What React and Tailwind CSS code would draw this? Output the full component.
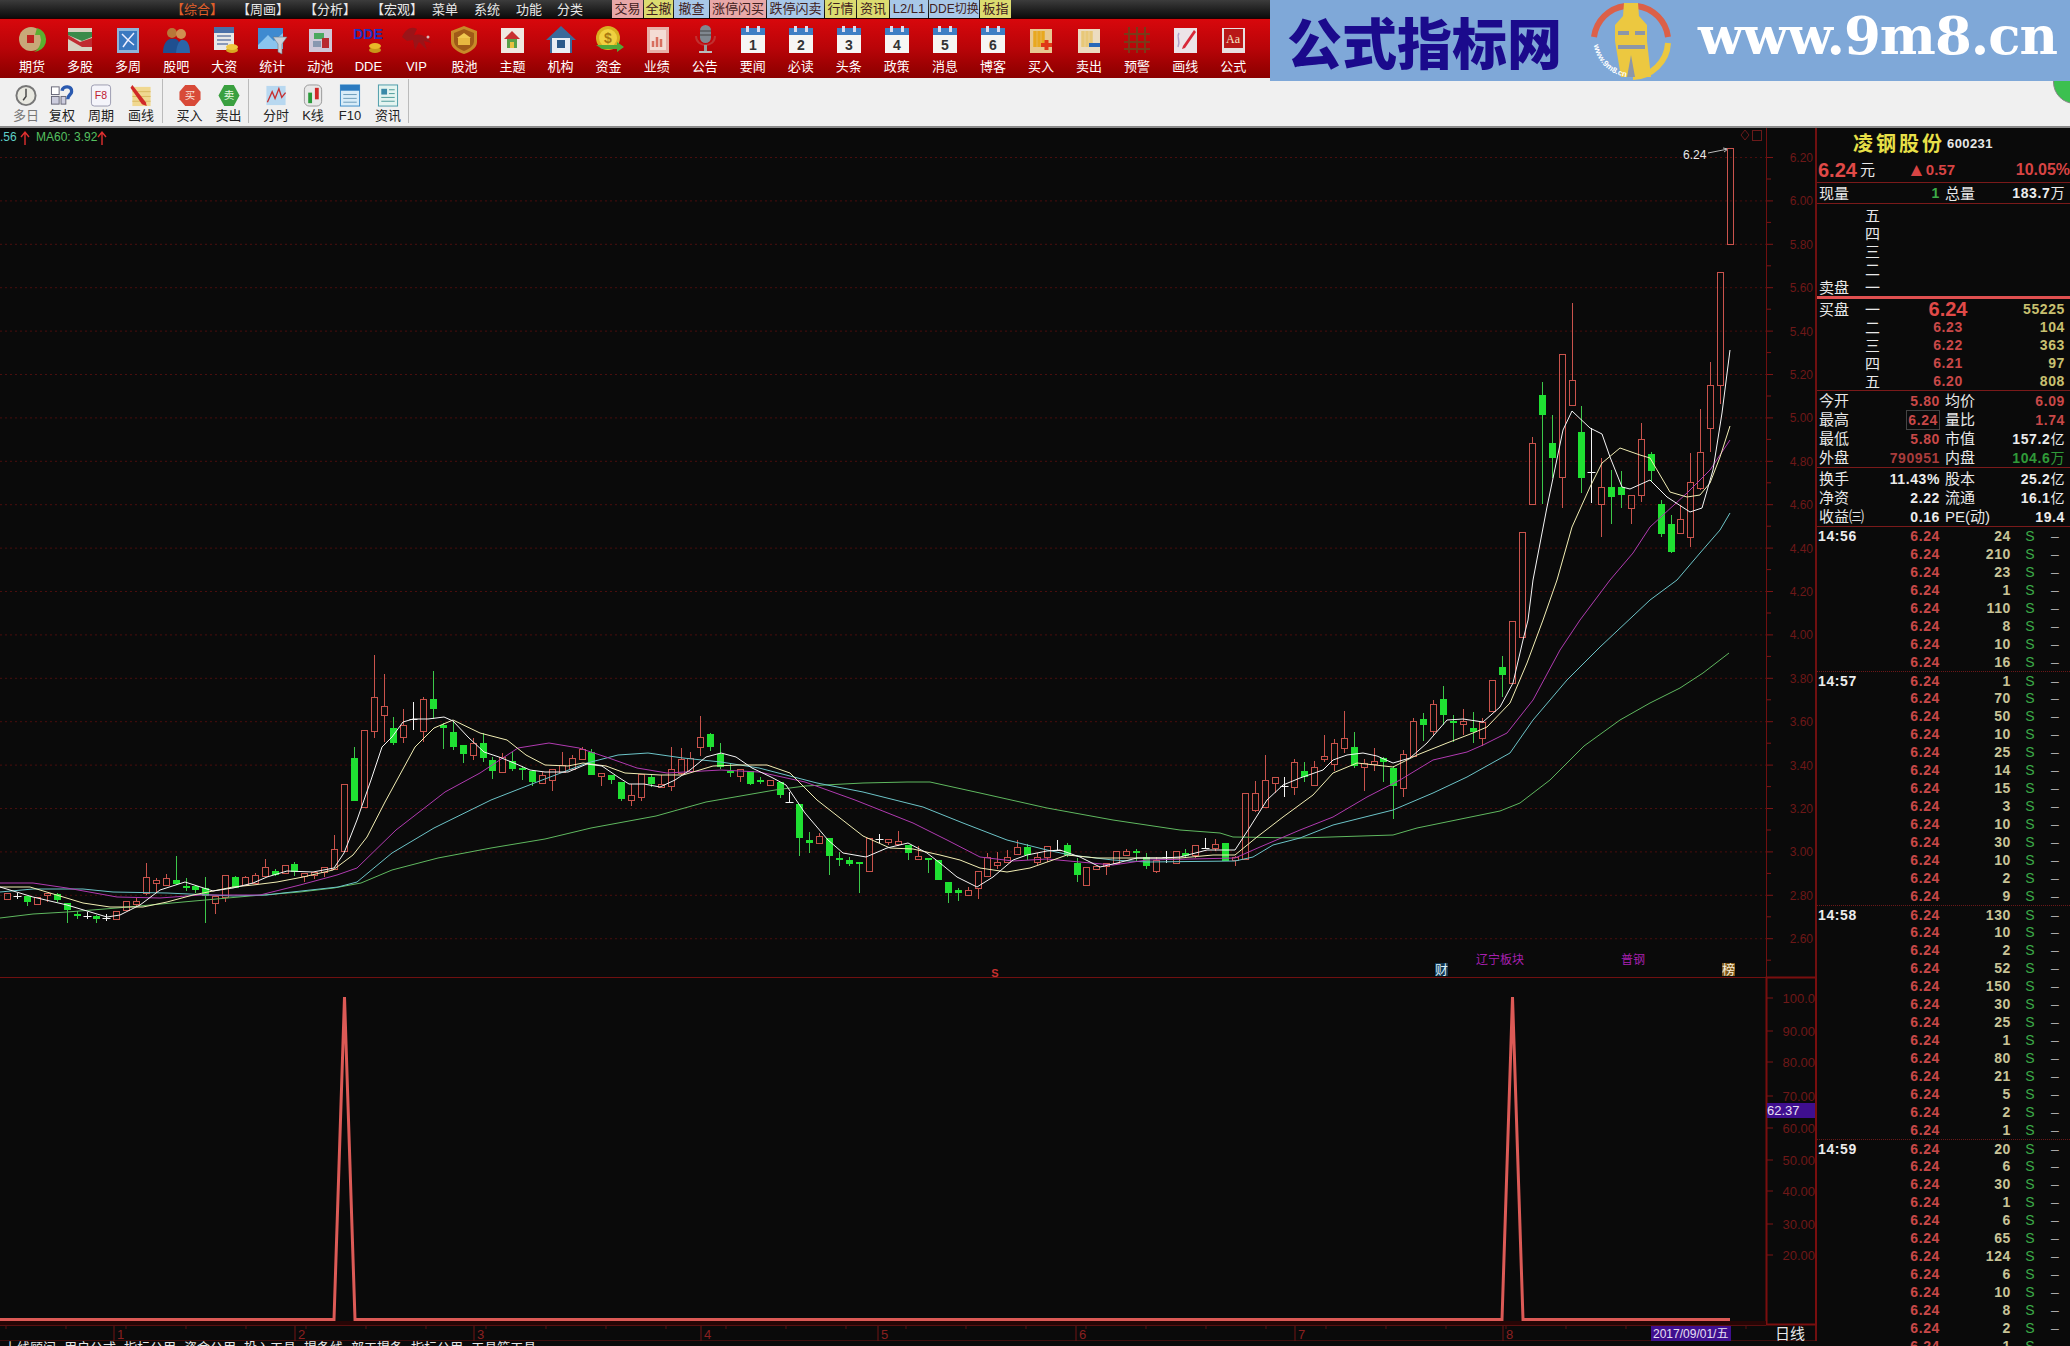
import React from 'react';

const CN = { fontFamily: '"Liberation Sans","Noto Sans CJK SC",sans-serif' };

// [high, top, bottom, low, kind] in page pixels; x comes from the index
const candles = [
  [893,893,899,899,'r'],[893,896,896,899,'w'],[896,896,902,906,'g'],[897,897,904,904,'r'],[893,893,895,902,'r'],
  [893,894,900,902,'g'],[903,903,910,923,'g'],[911,914,916,919,'g'],[912,916,916,919,'w'],[915,916,919,923,'g'],
  [914,918,918,921,'w'],[911,911,919,919,'r'],[901,901,910,910,'r'],[898,901,904,907,'r'],[863,877,893,895,'r'],
  [878,880,883,893,'r'],[874,878,885,885,'r'],[856,880,884,885,'g'],[878,886,888,891,'g'],[885,886,890,893,'g'],
  [877,888,896,923,'g'],[896,896,903,914,'r'],[875,875,897,902,'r'],[876,877,888,888,'g'],[876,877,885,885,'r'],
  [873,875,883,883,'r'],[859,867,876,877,'r'],[869,871,875,876,'g'],[865,865,873,873,'r'],[862,864,872,876,'g'],
  [873,873,876,882,'r'],[872,872,875,879,'r'],[867,867,872,877,'r'],[835,849,869,869,'r'],[784,784,851,851,'r'],
  [747,758,801,801,'g'],[730,730,807,807,'r'],[655,697,731,738,'r'],[674,706,715,742,'r'],[717,728,743,745,'g'],
  [709,725,737,743,'r'],[702,719,719,730,'w'],[697,699,731,742,'r'],[671,699,709,719,'g'],[723,725,728,749,'g'],
  [722,732,747,750,'g'],[745,745,754,763,'g'],[738,743,755,760,'r'],[733,743,758,762,'g'],[757,760,771,779,'g'],
  [753,757,772,772,'r'],[752,761,769,771,'g'],[766,768,770,780,'g'],[770,771,782,786,'g'],[772,775,783,783,'r'],
  [769,769,780,791,'r'],[752,765,772,772,'r'],[755,758,769,769,'r'],[747,749,759,760,'r'],[749,752,775,775,'g'],
  [773,773,776,786,'r'],[775,775,780,784,'g'],[782,782,799,801,'g'],[784,795,800,806,'r'],[774,774,797,801,'r'],
  [775,777,784,787,'g'],[775,784,787,787,'r'],[747,769,786,791,'r'],[748,759,773,775,'r'],[752,758,771,771,'r'],
  [716,737,747,756,'r'],[733,734,747,751,'g'],[743,754,767,769,'g'],[763,771,773,777,'g'],[769,769,776,782,'r'],
  [771,771,784,785,'g'],[777,780,782,784,'g'],[780,780,785,786,'r'],[782,782,795,798,'g'],[792,802,802,802,'w'],
  [804,804,838,856,'g'],[832,840,843,853,'g'],[833,836,843,843,'r'],[838,838,856,875,'g'],[852,858,860,866,'g'],
  [857,860,864,866,'g'],[862,862,864,893,'g'],[838,838,871,871,'r'],[834,839,839,843,'w'],[839,839,842,845,'r'],
  [831,841,844,846,'r'],[845,845,853,860,'g'],[846,856,859,860,'r'],[858,858,860,873,'g'],[860,860,880,880,'g'],
  [882,882,893,903,'g'],[888,890,893,901,'g'],[887,890,895,895,'r'],[871,871,888,899,'r'],[853,857,876,876,'r'],
  [852,862,865,869,'r'],[850,857,862,862,'r'],[840,847,854,854,'r'],[844,847,855,860,'g'],[853,857,862,865,'r'],
  [846,846,857,862,'r'],[840,850,850,851,'w'],[843,845,855,857,'g'],[858,863,875,882,'g'],[867,867,885,885,'r'],
  [866,866,869,869,'r'],[863,863,866,875,'r'],[851,851,863,863,'r'],[849,851,855,855,'r'],[849,851,853,861,'g'],
  [853,857,866,869,'g'],[857,860,871,873,'r'],[851,857,857,863,'w'],[851,851,863,863,'r'],[849,853,856,858,'g'],
  [845,845,855,858,'r'],[838,848,848,849,'w'],[839,844,848,851,'r'],[843,843,861,861,'g'],[856,857,860,866,'r'],
  [793,793,859,859,'r'],[781,793,810,812,'r'],[755,780,807,808,'r'],[777,777,783,793,'r'],[777,786,786,797,'w'],
  [759,762,787,795,'r'],[762,771,777,782,'g'],[761,767,785,785,'r'],[735,756,759,762,'r'],[739,743,764,771,'r'],
  [711,738,748,753,'r'],[732,747,766,768,'g'],[759,763,767,791,'r'],[748,761,764,771,'r'],[757,758,762,782,'g'],
  [766,768,786,819,'g'],[750,754,788,797,'r'],[718,721,756,756,'r'],[713,719,725,741,'g'],[700,704,731,735,'r'],
  [686,699,715,725,'g'],[715,721,722,742,'g'],[709,721,724,735,'r'],[712,728,732,743,'g'],[718,722,738,746,'r'],
  [680,680,711,711,'r'],[656,667,675,697,'g'],[621,621,683,683,'r'],[532,532,637,637,'r'],[437,443,504,504,'r'],
  [382,395,415,504,'g'],[415,443,458,478,'g'],[354,354,477,508,'r'],[303,380,405,405,'r'],[406,432,478,493,'g'],
  [428,472,472,503,'w'],[458,487,504,537,'r'],[470,487,497,524,'g'],[471,487,495,508,'g'],[495,495,508,524,'r'],
  [423,439,495,502,'r'],[452,454,471,482,'g'],[500,504,534,537,'g'],[515,524,552,553,'g'],[505,519,533,533,'r'],
  [453,482,537,547,'r'],[409,452,488,490,'r'],[362,385,428,452,'r'],[272,272,385,404,'r'],[148,148,244,244,'r'],
];

const ma5 = [[0,887],[33,897],[67,905],[107,917],[120,915],[140,905],[160,890],[185,882],[213,891],[233,888],[253,883],[267,877],[287,871],[313,872],[334,868],[344,853],[357,820],[371,780],[382,747],[392,737],[403,722],[413,719],[428,719],[444,717],[453,721],[468,737],[484,752],[499,757],[514,763],[530,770],[545,772],[568,772],[587,764],[602,766],[618,777],[629,784],[644,784],[660,787],[675,780],[690,770],[706,757],[721,753],[736,757],[752,768],[771,777],[786,785],[805,813],[828,840],[843,853],[866,857],[887,848],[908,843],[927,853],[940,863],[957,877],[977,887],[993,877],[1013,860],[1027,855],[1047,851],[1060,850],[1080,857],[1100,867],[1117,863],[1137,858],[1163,858],[1180,857],[1207,850],[1235,850],[1250,827],[1267,800],[1283,785],[1300,778],[1323,770],[1333,760],[1347,755],[1363,753],[1377,756],[1393,763],[1410,758],[1427,743],[1447,720],[1463,719],[1483,722],[1500,707],[1513,683],[1523,640],[1528,620],[1533,580],[1547,507],[1563,430],[1572,411],[1590,428],[1602,434],[1610,457],[1622,487],[1630,489],[1650,480],[1667,497],[1690,512],[1702,508],[1713,470],[1722,413],[1730,350]];
const ma10 = [[0,887],[30,887],[50,893],[83,903],[110,907],[143,907],[167,902],[193,895],[213,891],[233,887],[253,885],[277,882],[303,877],[333,870],[353,855],[367,837],[385,802],[415,747],[434,728],[453,720],[480,733],[507,740],[526,755],[545,765],[568,766],[583,763],[606,766],[625,773],[660,775],[683,775],[713,766],[740,765],[767,765],[790,773],[817,800],[863,836],[890,848],[913,849],[940,855],[960,860],[980,868],[1007,872],[1030,868],[1053,860],[1067,855],[1097,858],[1147,858],[1180,858],[1213,855],[1235,855],[1257,837],[1283,817],[1313,795],[1333,773],[1357,763],[1393,767],[1417,755],[1447,743],[1473,733],[1487,727],[1510,703],[1527,663],[1543,620],[1557,580],[1572,527],[1590,487],[1602,463],[1620,448],[1640,455],[1650,458],[1670,492],[1687,497],[1700,495],[1710,483],[1720,457],[1730,426]];
const ma20 = [[0,883],[33,883],[67,888],[117,897],[160,898],[200,895],[260,895],[300,885],[337,875],[357,868],[396,830],[445,792],[480,773],[518,748],[549,743],[579,748],[606,757],[637,768],[667,773],[721,770],[759,772],[805,782],[855,800],[913,823],[947,840],[980,857],[1013,861],[1047,859],[1080,862],[1113,865],[1147,860],[1235,858],[1260,847],[1300,830],[1333,817],[1367,797],[1400,780],[1433,760],[1467,752],[1483,745],[1507,733],[1533,700],[1560,650],[1580,620],[1610,580],[1633,553],[1650,527],[1687,493],[1710,470],[1730,440]];
const ma30 = [[0,892],[33,889],[83,889],[113,892],[167,893],[233,896],[267,895],[283,893],[338,887],[357,882],[392,853],[434,828],[491,800],[537,782],[587,763],[618,755],[648,753],[683,758],[721,762],[759,768],[817,783],[863,792],[923,807],[963,823],[1007,840],[1047,850],[1070,855],[1113,860],[1147,862],[1235,861],[1253,857],[1273,845],[1300,838],[1333,825],[1393,810],[1433,793],[1467,777],[1510,753],[1533,720],[1567,680],[1600,647],[1650,600],[1677,580],[1700,553],[1720,530],[1730,513]];
const ma60 = [[0,918],[33,914],[67,912],[117,908],[183,902],[250,896],[300,892],[334,888],[361,883],[392,870],[438,858],[491,848],[545,839],[591,828],[656,816],[706,802],[775,790],[805,786],[863,783],[907,782],[930,782],[980,793],[1047,808],[1113,820],[1180,830],[1220,833],[1233,837],[1300,838],[1393,835],[1417,828],[1500,811],[1520,803],[1550,780],[1567,763],[1584,746],[1620,720],[1650,703],[1680,688],[1703,673],[1729,653]];

const pts = (a) => a.map((p) => p.join(',')).join(' ');

const prices = ['6.20','6.00','5.80','5.60','5.40','5.20','5.00','4.80','4.60','4.40','4.20','4.00','3.80','3.60','3.40','3.20','3.00','2.80','2.60'];
const oscLabels = [['100.0',998],['90.00',1031],['80.00',1062],['70.00',1096],['60.00',1128],['50.00',1160],['40.00',1191],['30.00',1224],['20.00',1255]];
const months = [[116,'1'],[297,'2'],[476,'3'],[703,'4'],[880,'5'],[1078,'6'],[1297,'7'],[1505,'8']];

const Candle = ({ c, i }) => {
  const [hi, top, bot, lo, kind] = c;
  const x = Math.round(7.3 + 9.9 * i) + 0.5;
  if (kind === 'w') {
    return (
      <g stroke="#f4f4f4">
        <line x1={x} x2={x} y1={hi} y2={lo} />
        <line x1={x - 4} x2={x + 4} y1={top + 0.5} y2={top + 0.5} />
      </g>
    );
  }
  if (kind === 'g') {
    return (
      <g>
        <line x1={x} x2={x} y1={hi} y2={lo} stroke="#3cc84a" />
        <rect x={x - 3.5} y={top} width="7" height={Math.max(bot - top, 2)} fill="#1fe032" />
      </g>
    );
  }
  return (
    <g stroke="#c9534c" fill="none">
      {hi < top && <line x1={x} x2={x} y1={hi} y2={top} />}
      {lo > bot && <line x1={x} x2={x} y1={bot} y2={lo} />}
      <rect x={x - 3} y={top + 0.5} width="6" height={Math.max(bot - top, 2)} />
    </g>
  );
};

const UpArrow = ({ x }) => (
  <path d={`M${x} 145 V133 M${x - 4} 137 L${x} 132 L${x + 4} 137`} stroke="#e03030" strokeWidth="1.4" fill="none" />
);

const Chart = () => (
  <svg viewBox="0 128 1817 1213" className="block w-[1817px] h-[1213px]" style={CN}>
    {/* grid */}
    {prices.map((p, i) => (
      <line key={p} x1="0" x2="1766" y1={157.5 + i * 43.4} y2={157.5 + i * 43.4} stroke="#4a0e0e" strokeDasharray="2 3" />
    ))}
    {/* axis */}
    {prices.map((p, i) => (
      <g key={p} stroke="#7a1414">
        <line x1="1766" x2="1773" y1={157.5 + i * 43.4} y2={157.5 + i * 43.4} />
        <line x1="1766" x2="1771" y1={179 + i * 43.4} y2={179 + i * 43.4} />
        <text x="1813" y={162 + i * 43.4} textAnchor="end" fontSize="12" fill="#6e1818" stroke="none">{p}</text>
      </g>
    ))}
    <line x1="1766.5" x2="1766.5" y1="128" y2="978" stroke="#701010" />
    <line x1="1816" x2="1816" y1="128" y2="1341" stroke="#701010" strokeWidth="2" />
    <line x1="0" x2="1766" y1="977.5" y2="977.5" stroke="#701010" />
    <rect x="1766.5" y="977.5" width="49.5" height="347" fill="none" stroke="#7a0e0e" strokeWidth="2" />
    {oscLabels.map(([t, y]) => (
      <g key={t}>
        <line x1="1767" x2="1773" y1={y} y2={y} stroke="#7a1414" />
        <text x="1815" y={y + 5} textAnchor="end" fontSize="13" fill="#6e1818">{t}</text>
      </g>
    ))}
    <rect x="1767" y="1103" width="48" height="15" fill="#3f0f8f" />
    <text x="1767" y="1115" fontSize="13" fill="#e8e0f4">62.37</text>

    {/* labels on the price pane */}
    <text x="0" y="141" fontSize="12" fill="#5fd0c8">.56</text>
    <UpArrow x={25} />
    <text x="36" y="141" fontSize="12" fill="#55c060">MA60: 3.92</text>
    <UpArrow x={102} />
    <text x="1683" y="159" fontSize="12" fill="#e8e8e8">6.24</text>
    <path d="M1708 153 L1728 149 M1723 148 L1728 149 L1724 152" stroke="#bbb" fill="none" />
    <path d="M1745 130 l4 5 l-4 5 l-4 -5 z" stroke="#6a1a1a" fill="none" />
    <rect x="1752.5" y="130.5" width="9" height="10" stroke="#6a1a1a" fill="none" />
    <text x="995" y="977" textAnchor="middle" fontSize="11" fontWeight="700" fill="#c83030">S</text>
    <rect x="1435" y="963" width="13" height="13" fill="#0f3550" />
    <text x="1441.5" y="974" textAnchor="middle" fontSize="13" fill="#d8eef8">财</text>
    <text x="1476" y="964" fontSize="12" fill="#a820b0">辽宁板块</text>
    <text x="1621" y="964" fontSize="12" fill="#a820b0">普钢</text>
    <rect x="1722" y="963" width="13" height="13" fill="#7a5518" />
    <text x="1728.5" y="974" textAnchor="middle" fontSize="13" fill="#f8eed8">榜</text>

    {/* candles and averages */}
    {candles.map((c, i) => <Candle key={i} c={c} i={i} />)}
    <g fill="none" strokeLinejoin="round" strokeWidth="1">
      <polyline points={pts(ma60)} stroke="#5fb85f" />
      <polyline points={pts(ma30)} stroke="#6cc4c8" />
      <polyline points={pts(ma20)} stroke="#b03ab0" />
      <polyline points={pts(ma10)} stroke="#f2eeb4" />
      <polyline points={pts(ma5)} stroke="#f6f6f6" />
    </g>

    {/* oscillator */}
    <rect x="0" y="1321" width="1766" height="4" fill="#260505" />
    <polyline
      points="0,1319.5 334,1319.5 344.5,997 355,1319.5 1502,1319.5 1512.5,997 1523,1319.5 1730,1319.5"
      fill="none"
      stroke="#dc5a56"
      strokeWidth="3"
    />

    {/* time axis */}
    <line x1="0" x2="1766" y1="1325.5" y2="1325.5" stroke="#5a1010" />
    <line x1="0" x2="1816" y1="1341" y2="1341" stroke="#701010" />
    {Array.from({ length: 30 }).map((_, i) => (
      <line key={i} x1={60 * i + 6} x2={60 * i + 6} y1="1325" y2="1329" stroke="#5a1010" />
    ))}
    {months.map(([x, t]) => (
      <g key={t}>
        <line x1={x - 2} x2={x - 2} y1="1326" y2="1341" stroke="#701515" />
        <text x={x + 1} y="1339" fontSize="13" fill="#8a2020">{t}</text>
      </g>
    ))}
    <rect x="1651" y="1326" width="80" height="15" fill="#3f0f8f" />
    <text x="1653" y="1338" fontSize="12" fill="#e8e0f4">2017/09/01/五</text>
    <text x="1790" y="1339" textAnchor="middle" fontSize="15" fill="#e8e8e8">日线</text>
  </svg>
);

/* ---------- toolbar icons ---------- */
const Cal = ({ n }) => (
  <svg viewBox="0 0 32 32" className="w-8 h-8">
    <rect x="4" y="6" width="24" height="24" fill="#f6f6f4" />
    <rect x="4" y="5" width="24" height="7" fill="#3f7fc4" />
    <rect x="9" y="3" width="3" height="6" fill="#dde" />
    <rect x="20" y="3" width="3" height="6" fill="#dde" />
    <text x="16" y="27" textAnchor="middle" fontSize="14" fontWeight="700" fill="#333">{n}</text>
  </svg>
);

const S = ({ children }) => <svg viewBox="0 0 32 32" className="w-8 h-8">{children}</svg>;

const redItems = [
  ['期货', <S><circle cx="15" cy="16" r="12" fill="#c8a878" /><rect x="11" y="12" width="7" height="8" fill="#c02020" /><path d="M21 5 A12 12 0 0 1 22 28 L18 29 A14 14 0 0 0 24 12 L19 12 Z" fill="#5ab030" /></S>],
  ['多股', <S><rect x="4" y="5" width="24" height="23" fill="#d8d0c0" /><path d="M4 9 H28 V14 L18 18 L4 12 Z" fill="#3a8a4a" /><path d="M4 12 L16 19 L28 15 V24 H18 L4 16 Z" fill="#c02a30" /></S>],
  ['多周', <S><rect x="5" y="5" width="22" height="25" fill="#8fb4d8" /><rect x="7" y="8" width="18" height="19" fill="#3a78c0" /><path d="M10 11 L16 17 L22 10 M16 17 L11 24 M16 17 L22 22" stroke="#eef" strokeWidth="1.5" fill="none" /></S>],
  ['股吧', <S><circle cx="12" cy="10" r="5" fill="#b87838" /><circle cx="21" cy="11" r="5" fill="#d09050" /><path d="M3 30 C3 19 9 15 13 16 C18 15 21 20 21 30 Z" fill="#1f4f90" /><path d="M16 30 C17 21 20 16 23 17 C28 17 30 23 30 30 Z" fill="#2a65a8" /></S>],
  ['大资', <S><rect x="6" y="5" width="20" height="22" fill="#e8e8e8" /><rect x="6" y="4" width="20" height="6" fill="#4a70a8" /><path d="M9 13 H23 M9 17 H23 M9 21 H20" stroke="#8a9ab8" strokeWidth="2" /><ellipse cx="24" cy="27" rx="6" ry="3" fill="#d8a820" /><ellipse cx="24" cy="24" rx="6" ry="3" fill="#f0c840" /></S>],
  ['统计', <S><rect x="2" y="5" width="25" height="21" fill="#3e8ad0" /><path d="M2 22 L12 12 L18 18 L27 10 V26 H2 Z" fill="#8ac4ee" /><path d="M17 14 H31 L26 21 V31 L22 29 V21 Z" fill="#c8d0d8" stroke="#6a7a88" strokeWidth=".6" /></S>],
  ['动池', <S><rect x="5" y="6" width="23" height="23" fill="#cfc8d8" /><path d="M10 10 H20 V16 H10 Z" fill="#4ca860" /><path d="M18 15 H25 V25 H18 Z" fill="#b82a30" /><path d="M9 18 H17 V24 H9 Z" fill="#8898b0" /></S>],
  ['DDE', <S><text x="16" y="16" textAnchor="middle" fontSize="14" fontWeight="700" fill="#2030c0">DDE</text><ellipse cx="23" cy="27" rx="6" ry="3" fill="#c89818" /><ellipse cx="23" cy="23" rx="6" ry="3" fill="#e8b828" /></S>],
  ['VIP', <S><path d="M2 14 C6 5 12 3 17 6 L14 12 C22 10 28 14 31 20 L24 18 L27 27 L19 19 L15 27 L13 17 L7 18 Z" fill="#9a1418" /><circle cx="28" cy="14" r="1.5" fill="#d8b8b8" /></S>],
  ['股池', <S><path d="M16 3 L29 8 V19 C29 25 22 29 16 31 C10 29 3 25 3 19 V8 Z" fill="#c88a28" /><path d="M16 6 L26 10 V18 C26 23 21 26 16 28 C11 26 6 23 6 18 V10 Z" fill="#a05a18" /><rect x="10" y="15" width="12" height="7" fill="#e8b840" /><path d="M9 15 L16 10 L23 15 Z" fill="#f0c850" /></S>],
  ['主题', <S><rect x="5" y="5" width="23" height="25" fill="#f0e8e0" /><path d="M16 8 L24 16 H8 Z" fill="#c83030" /><rect x="11" y="16" width="10" height="9" fill="#58a048" /><rect x="14" y="19" width="4" height="6" fill="#e8c040" /></S>],
  ['机构', <S><path d="M16 3 L31 17 H27 V30 H5 V17 H1 Z" fill="#3a6a9a" /><rect x="7" y="15" width="18" height="15" fill="#e8eef4" /><rect x="12" y="17" width="8" height="8" fill="#2a5a8a" /></S>],
  ['资金', <S><circle cx="15" cy="15" r="12" fill="#d8b020" /><circle cx="15" cy="15" r="9" fill="#f0d040" /><text x="15" y="20" textAnchor="middle" fontSize="14" fontWeight="700" fill="#a87810">$</text><path d="M3 22 H24 V19 L31 24 L24 29 V26 H9 Z" fill="#50a838" /></S>],
  ['业绩', <S><rect x="6" y="4" width="22" height="26" fill="#e8b0a8" /><rect x="9" y="7" width="16" height="20" fill="#f4dcd4" /><path d="M12 24 V18 M16 24 V14 M20 24 V16" stroke="#d87060" strokeWidth="2.5" /></S>],
  ['公告', <S><rect x="11" y="2" width="11" height="18" rx="5.5" fill="#808890" /><path d="M11 8 H22 M11 12 H22" stroke="#444" /><path d="M7 13 C7 25 26 25 26 13" stroke="#c03030" strokeWidth="2" fill="none" /><rect x="15" y="22" width="3" height="6" fill="#999" /><rect x="10" y="28" width="13" height="2" fill="#bbb" /></S>],
  ['要闻', <Cal n="1" />],
  ['必读', <Cal n="2" />],
  ['头条', <Cal n="3" />],
  ['政策', <Cal n="4" />],
  ['消息', <Cal n="5" />],
  ['博客', <Cal n="6" />],
  ['买入', <S><rect x="5" y="6" width="22" height="24" fill="#e8c890" /><path d="M10 8 V24 M14 8 V24 M18 8 V20" stroke="#e8a820" strokeWidth="3.5" /><path d="M16 22 H27 M21.5 17 V27" stroke="#e03818" strokeWidth="4" /></S>],
  ['卖出', <S><rect x="5" y="6" width="22" height="24" fill="#ecdcc0" /><path d="M10 8 V24 M14 8 V24 M18 8 V20" stroke="#e8c878" strokeWidth="3.5" /><path d="M16 22 H27" stroke="#2868b8" strokeWidth="4" /></S>],
  ['预警', <S><path d="M8 4 V30 M16 4 V30 M24 4 V30 M3 11 H29 M3 19 H29 M3 26 H29" stroke="#7a3a18" strokeWidth="2" /></S>],
  ['画线', <S><rect x="5" y="5" width="23" height="25" fill="#ece4e8" /><path d="M10 10 C7 14 12 17 9 24" stroke="#b0a0c8" strokeWidth="1.5" fill="none" /><path d="M14 23 L25 7 L27 9 L16 25 L13 26 Z" fill="#d82838" /></S>],
  ['公式', <S><rect x="5" y="5" width="23" height="25" fill="#e8e0e0" /><rect x="7" y="6" width="19" height="19" fill="#b81818" /><text x="16" y="20" textAnchor="middle" fontSize="12" fill="#f4e8c8" style={{ fontFamily: '"Liberation Serif",serif' }}>Aa</text></S>],
];

const greyGroups = [
  { w: 153, pl: 0, items: [
    ['多日', 32, <svg viewBox="0 0 24 24" className="w-6 h-6"><circle cx="12" cy="12" r="10" fill="#e8e8e0" stroke="#777" strokeWidth="2" /><path d="M12 5 V13 L9 17" stroke="#444" strokeWidth="1.5" fill="none" /></svg>],
    ['复权', 40, <svg viewBox="0 0 24 24" className="w-6 h-6"><rect x="1" y="3" width="8" height="8" fill="#fff" stroke="#667" /><rect x="1" y="13" width="8" height="8" fill="#ccd" stroke="#667" /><rect x="11" y="13" width="5" height="8" fill="#ccd" stroke="#667" /><path d="M12 7 C13 1 23 2 22 8 C22 11 18 11 18 16" stroke="#2a5ab0" strokeWidth="3.5" fill="none" /></svg>],
    ['周期', 38, <svg viewBox="0 0 24 24" className="w-6 h-6"><rect x="2" y="1" width="20" height="22" rx="3" fill="#f4f4fa" stroke="#9a9ab0" /><text x="12" y="16" textAnchor="middle" fontSize="11" fill="#c02030">F8</text></svg>],
    ['画线', 42, <svg viewBox="0 0 24 24" className="w-6 h-6"><rect x="3" y="3" width="19" height="20" fill="#f0d890" /><path d="M3 8 H22 M3 13 H22 M3 18 H22" stroke="#d8b860" /><path d="M3 1 L17 19 L18 23 L13 21 L1 4 Z" fill="#d02828" /></svg>],
  ] },
  { w: 86, pl: 7, items: [
    ['买入', 39, <svg viewBox="0 0 24 24" className="w-6 h-6"><path d="M7 1 H17 L23 8 V16 L17 23 H7 L1 16 V8 Z" fill="#d84a38" /><text x="12" y="16" textAnchor="middle" fontSize="11" fill="#f8e0d8">买</text></svg>],
    ['卖出', 39, <svg viewBox="0 0 24 24" className="w-6 h-6"><path d="M7 1 H17 L23 12 L17 23 H7 L1 12 Z" fill="#3aa040" /><text x="12" y="16" textAnchor="middle" fontSize="11" fill="#e8f8e0">卖</text></svg>],
  ] },
  { w: 160, pl: 8, items: [
    ['分时', 38, <svg viewBox="0 0 24 24" className="w-6 h-6"><rect x="2" y="2" width="20" height="20" fill="#b8d8f0" /><path d="M3 19 L8 8 L11 15 L15 5 L18 14 L22 9" stroke="#c83030" strokeWidth="1.4" fill="none" /></svg>],
    ['K线', 36, <svg viewBox="0 0 24 24" className="w-6 h-6"><rect x="3" y="1" width="18" height="22" rx="5" fill="#e8e8e8" stroke="#999" /><rect x="7" y="9" width="4" height="11" fill="#2a9a3a" /><rect x="14" y="4" width="4" height="12" fill="#d02828" /></svg>],
    ['F10', 38, <svg viewBox="0 0 24 24" className="w-6 h-6"><rect x="2" y="1" width="20" height="22" fill="#d8ecf8" stroke="#3a8ac8" /><rect x="2" y="1" width="20" height="6" fill="#2a7ac0" /><path d="M5 11 H19 M5 15 H19 M5 19 H19" stroke="#6a9ab8" /></svg>],
    ['资讯', 38, <svg viewBox="0 0 24 24" className="w-6 h-6"><rect x="2" y="1" width="20" height="22" fill="#e4f4f0" stroke="#4a9aa8" /><rect x="5" y="5" width="6" height="6" fill="#3a8aa8" /><path d="M13 6 H19 M13 10 H19 M5 14 H19 M5 18 H19" stroke="#4a9a98" /></svg>],
  ] },
];

const topMenu = [
  ['【综合】', 42, 'text-[#e0602a]', 0], ['【周画】', 44, 'text-[#e8e8e8]', 24], ['【分析】', 44, 'text-[#e8e8e8]', 23],
  ['【宏观】', 44, 'text-[#e8e8e8]', 23], ['菜单', 26, 'text-[#e8e8e8]', 17], ['系统', 26, 'text-[#e8e8e8]', 16],
  ['功能', 26, 'text-[#e8e8e8]', 16], ['分类', 26, 'text-[#e8e8e8]', 15],
];
const topButtons = [
  ['交易', 32, 'bg-[#e8a8a8]'], ['全撤', 30, 'bg-[#dcdc70]'], ['撤查', 36, 'bg-[#a8c8e8]'], ['涨停闪买', 57, 'bg-[#e8a8a8]'],
  ['跌停闪卖', 58, 'bg-[#a8c8e8]'], ['行情', 32, 'bg-[#dcdc70]'], ['资讯', 33, 'bg-[#dcdc70]'], ['L2/L1', 39, 'bg-[#a8c8e8]'],
  ['DDE切换', 51, 'bg-[#a8c8e8]'], ['板指', 32, 'bg-[#dcdc70]'],
];

const Banner = () => (
  <div className="w-[800px] h-[81px] bg-[#7fa8d8] flex items-center relative z-10">
    <div className="ml-[17px] w-[304px] shrink-0 text-[55px] leading-none font-black text-[#1b0a8c] whitespace-nowrap" style={{ fontFamily: '"Noto Sans CJK SC",sans-serif' }}>公式指标网</div>
    <svg viewBox="0 0 80 80" className="w-[80px] h-[80px] shrink-0">
      <path d="M34 5 A36 36 0 0 0 3 36" stroke="#dc6048" strokeWidth="6" fill="none" />
      <path d="M46 5 A36 36 0 0 1 77 36" stroke="#dc6048" strokeWidth="6" fill="none" />
      <path d="M77 42 A36 36 0 0 1 42 76" stroke="#ecc840" strokeWidth="6" fill="none" />
      <path d="M33 2 H47 L48 15 L56 24 V40 L60 76 H38 V76 H30 L24 40 V24 L32 15 Z" fill="#ecc840" />
      <path d="M27 30 H38 V34 H27 Z M44 30 H54 V34 H44 Z M27 44 H54 V48 H27 Z M40 54 L44 76 H36 Z" fill="#8c96a8" />
      <path id="ringtext" d="M3 44 A38 38 0 0 0 36 76" fill="none" />
      <text fontSize="8" fill="#fff" fontWeight="700"><textPath href="#ringtext">www.9m8.cn</textPath></text>
    </svg>
    <div className="ml-[27px] shrink-0 text-[53px] leading-none font-bold text-white whitespace-nowrap tracking-[-1px] pb-[10px]" style={{ fontFamily: '"DejaVu Serif",serif' }}>www.9m8.cn</div>
  </div>
);

const Line = ({ h = 'h-px' }) => <div className={`${h} bg-[#7a1a1a]`} />;

const LABEL = 'text-[15px] leading-none text-[#e8e8e8]';
const NUM = 'text-[14px] leading-none font-bold tracking-[0.6px]';

const Stat = ({ a, av, ac, b, bv, bc, boxed, unit, uc }) => (
  <div className="flex h-[19px] items-center pl-[2px]">
    <div className="w-[121px] flex justify-between items-center">
      <span className={LABEL}>{a}</span>
      <span className={`${NUM} ${ac} ${boxed ? 'border border-[#444] px-[1px] py-[2px]' : ''}`}>{av}</span>
    </div>
    <div className="w-[120px] ml-[5px] flex justify-between items-center">
      <span className={LABEL}>{b}</span>
      <span className={`${NUM} ${bc}`}>{bv}{unit && <span className={`font-normal text-[14px] ${uc}`}>{unit}</span>}</span>
    </div>
  </div>
);

const Level = ({ tag, n, price, vol, big }) => (
  <div className="flex h-[18px] items-center pl-[2px]">
    <span className={`${LABEL} w-[46px]`}>{tag}</span>
    <span className={`${LABEL} w-[40px]`}>{n}</span>
    {price && (
      <span className={`w-[86px] text-center ${big ? 'text-[20px] leading-none font-bold text-[#e04a48]' : 'text-[14px] leading-none font-bold text-[#c84848] tracking-[0.6px]'}`}>{price}</span>
    )}
    {vol && <span className={`${NUM} flex-1 text-right pr-[5px] text-[#c8c070]`}>{vol}</span>}
  </div>
);

const ticks = [
  ['14:56', [24,210,23,1,110,8,10,16]],
  ['14:57', [1,70,50,10,25,14,15,3,10,30,10,2,9]],
  ['14:58', [130,10,2,52,150,30,25,1,80,21,5,2,1]],
  ['14:59', [20,6,30,1,6,65,124,6,10,8,2,1]],
];

const TickRow = ({ time, vol, dotted }) => (
  <div className={`flex h-[18px] items-center ${dotted ? 'border-t border-dotted border-[#6a1818]' : ''}`}>
    <span className={`${NUM} w-[60px] pl-[1px] text-[#ececec]`}>{time}</span>
    <span className={`${NUM} w-[63px] text-right text-[#c84848]`}>6.24</span>
    <span className={`${NUM} w-[71px] text-right text-[#c8c498]`}>{vol}</span>
    <span className="w-[38px] text-center text-[14px] leading-none text-[#3cab48]">S</span>
    <span className="w-[12px] text-center text-[14px] leading-none text-[#a8a8a8]">–</span>
  </div>
);

const QuotePanel = () => (
  <div className="w-[253px] h-[1218px] overflow-hidden text-white">
    <div className="h-[29px] flex items-center pl-[36px] pt-[2px]">
      <span className="text-[20px] leading-none font-bold text-[#e8e048] tracking-[3px]" style={{ fontFamily: '"Liberation Serif","Noto Sans CJK SC",serif' }}>凌钢股份</span>
      <span className="text-[13px] leading-none font-bold ml-[2px] tracking-[0.4px] text-[#e8e8e8]">600231</span>
    </div>
    <div className="h-[25px] flex items-center pl-[1px]">
      <span className="text-[20px] leading-none font-bold text-[#e04a48] w-[42px]">6.24</span>
      <span className={`${LABEL} w-[47px]`}>元</span>
      <span className="text-[15px] leading-none font-bold text-[#d84444] flex items-center"><span className="text-[19px] leading-none">▲</span>0.57</span>
      <span className="text-[16px] leading-none font-bold text-[#d84444] ml-auto">10.05%</span>
    </div>
    <Line />
    <div className="h-[20px] flex items-center pl-[2px]">
      <div className="w-[121px] flex justify-between items-center">
        <span className={LABEL}>现量</span>
        <span className={`${NUM} text-[#3cab48]`}>1</span>
      </div>
      <div className="w-[120px] ml-[5px] flex justify-between items-center">
        <span className={LABEL}>总量</span>
        <span className={`${NUM} text-[#ececec]`}>183.7<span className="font-normal">万</span></span>
      </div>
    </div>
    <Line />
    <div className="pt-[2px]">
      <Level n="五" /><Level n="四" /><Level n="三" /><Level n="二" /><Level tag="卖盘" n="一" />
    </div>
    <div className="h-[3px] bg-[#e05050]" />
    <div className="pt-px">
      <Level tag="买盘" n="一" price="6.24" vol="55225" big />
      <Level n="二" price="6.23" vol="104" />
      <Level n="三" price="6.22" vol="363" />
      <Level n="四" price="6.21" vol="97" />
      <Level n="五" price="6.20" vol="808" />
    </div>
    <Line />
    <Stat a="今开" av="5.80" ac="text-[#c84848]" b="均价" bv="6.09" bc="text-[#c84848]" />
    <Stat a="最高" av="6.24" ac="text-[#c84848]" boxed b="量比" bv="1.74" bc="text-[#c84848]" />
    <Stat a="最低" av="5.80" ac="text-[#c84848]" b="市值" bv="157.2" bc="text-[#ececec]" unit="亿" />
    <Stat a="外盘" av="790951" ac="text-[#a83c3c]" b="内盘" bv="104.6" bc="text-[#2f9a38]" unit="万" uc="text-[#2f9a38]" />
    <Line />
    <div className="pt-px">
      <Stat a="换手" av="11.43%" ac="text-[#ececec]" b="股本" bv="25.2" bc="text-[#ececec]" unit="亿" />
      <Stat a="净资" av="2.22" ac="text-[#ececec]" b="流通" bv="16.1" bc="text-[#ececec]" unit="亿" />
      <Stat a="收益㈢" av="0.16" ac="text-[#ececec]" b="PE(动)" bv="19.4" bc="text-[#ececec]" />
    </div>
    <Line />
    {ticks.map(([time, vols], b) => vols.map((v, i) => (
      <TickRow key={`${b}-${i}`} time={i === 0 ? time : ''} vol={v} dotted={i === 0 && b > 0} />
    )))}
  </div>
);

export default function App() {
  return (
    <div className="w-[2070px] h-[1346px] overflow-hidden bg-[#0a0a0a] flex flex-col relative" style={CN}>
      {/* header */}
      <div className="flex h-[78px]">
        <div className="w-[1270px]">
          <div className="h-[19px] flex items-center bg-gradient-to-b from-[#3c3c3c] to-[#0c0c0c] pl-[171px] border-b border-[#200]">
            {topMenu.map(([t, w, c, m]) => (
              <span key={t} className={`text-[13px] leading-none whitespace-nowrap text-center ${c}`} style={{ width: w, marginLeft: m }}>{t}</span>
            ))}
            <div className="flex ml-[29px] h-[18px]">
              {topButtons.map(([t, w, c]) => (
                <span key={t} className={`leading-[18px] text-center whitespace-nowrap text-[#402020] mr-px ${t === 'DDE切换' ? 'text-[12px]' : 'text-[13px]'} ${c}`} style={{ width: w - 1 }}>{t}</span>
              ))}
            </div>
          </div>
          <div className="h-[59px] flex pl-[8px] bg-gradient-to-b from-[#d8080c] via-[#b80408] to-[#8a0000]">
            {redItems.map(([t, icon], i) => (
              <div key={i} className="w-[48.05px] shrink-0 flex flex-col items-center pt-[4px]">
                {icon}
                <span className="mt-[4px] text-[13px] leading-[16px] text-white whitespace-nowrap">{t}</span>
              </div>
            ))}
          </div>
        </div>
        <Banner />
      </div>
      <div className="h-[48px] bg-[#f0f0f0] flex pl-[10px] relative">
        {greyGroups.map((g, gi) => (
          <div key={gi} className="flex border-r border-[#bbb] h-[44px] mt-[1px] shrink-0 pt-[5px]" style={{ width: g.w, paddingLeft: g.pl }}>
            {g.items.map(([t, w, icon]) => (
              <div key={t + gi} className="flex flex-col items-center shrink-0" style={{ width: w }}>
                {icon}
                <span className={`mt-[1px] text-[13px] leading-[15px] whitespace-nowrap ${t === '多日' ? 'text-[#777]' : 'text-[#222]'}`}>{t}</span>
              </div>
            ))}
          </div>
        ))}
        <div className="absolute right-[-27px] top-[-18px] w-[44px] h-[44px] rounded-full bg-[#3cc050] border border-[#888]" />
      </div>
      <div className="h-[2px] bg-[#8a8a8a]" />

      {/* chart and quote */}
      <div className="flex flex-1 min-h-0">
        <div className="w-[1817px] flex flex-col">
          <Chart />
          <div className="h-[5px] overflow-hidden flex text-[13px] leading-[14px] text-[#e8e8e8] pl-[4px] gap-[8px] whitespace-nowrap">
            <span>上线顾问</span><span>用户公式</span><span>指标公用</span><span>资金公用</span><span>投入工具</span><span>提条线</span><span>部工提条</span><span>指标公用</span><span>工具箱工具</span>
          </div>
        </div>
        <QuotePanel />
      </div>
    </div>
  );
}
